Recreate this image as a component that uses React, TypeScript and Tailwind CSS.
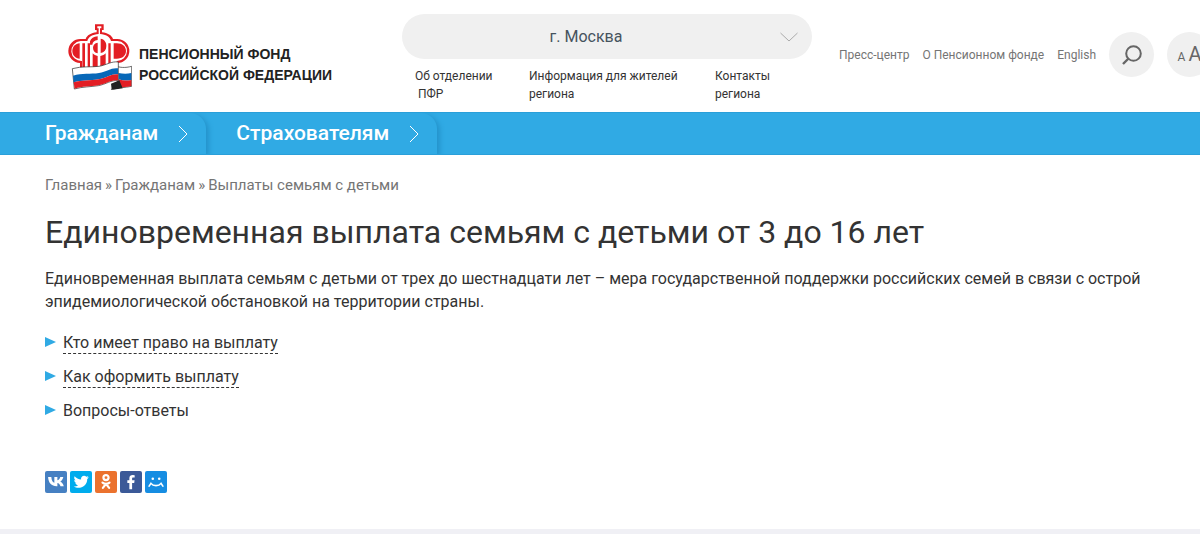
import React from "react";

function Logo() {
  return (
    <svg viewBox="24 24 192 198" className="h-[66px] w-16 shrink-0" aria-hidden="true">
      <path
        d="M105 25H131V42H126V49C143 51 155 58 159 69H172A36 36 0 0 1 172 141V156H60V141A36 36 0 0 1 62 69H77C81 58 93 51 110 49V42H105Z"
        fill="#e31e24"
      />
      <path
        d="M112 31H124V37H120V54C138 55 150 63 153 75H172A30 30 0 0 1 170 135V160H66V135A30 30 0 0 1 62 75H82C85 63 98 55 116 54V37H112Z"
        fill="#fff"
      />
      <path d="M59 82V128C46 127 37 118 37 105S46 83 59 82Z" fill="#e31e24" />
      <path d="M67 82H75V160H67ZM83 82H90V160H83Z" fill="#e31e24" />
      <path d="M90 76C93 67 101 62 113 61V72C103 73 98 78 97 86H90Z" fill="#e31e24" />
      <path d="M99 95C99 87 104 81 113 80V112C104 111 99 104 99 95Z" fill="#e31e24" />
      <path d="M122 68C133 70 139 78 139 90S133 109 122 111Z" fill="#e31e24" />
      <path d="M98 112C102 117 107 119 113 120V160H98ZM121 120C128 119 133 117 137 112V155H121Z" fill="#e31e24" />
      <path d="M145 82H152V150H145ZM161 82H170C188 82 198 92 198 105S188 128 170 128H161Z" fill="#e31e24" />
      <path d="M160 147C178 156 196 156 215 151V211C194 215 175 215 154 221L175 194Z" fill="#fff" stroke="#222" strokeWidth="2" />
      <path d="M175 171C190 174 202 174 214 171V192C200 195 188 194 176 190Z" fill="#0868b8" />
      <path d="M176 190C188 194 200 195 214 192V210C202 213 187 214 174 215Z" fill="#e31e24" />
      <path d="M153 203L178 193L188 217C176 218 165 222 155 220Z" fill="#222" />
      <path d="M37 158C66 150 92 154 117 151C140 147 154 135 175 138V194C154 191 138 205 115 209C89 213 68 212 43 219Z" fill="#fff" stroke="#222" strokeWidth="2" />
      <path d="M39 179C66 171 92 175 117 171C141 167 154 154 174 157V175C154 173 140 186 116 190C90 194 67 192 41 199Z" fill="#0868b8" />
      <path d="M41 199C67 192 90 194 116 190C140 186 154 173 174 175V193C154 190 138 204 115 208C89 212 68 211 44 218Z" fill="#e31e24" />
    </svg>
  );
}

const regionLinks = [
  { text: "Об отделении\n\u00a0ПФР", cls: "w-[114px]" },
  { text: "Информация для жителей\nрегиона", cls: "w-[186px]" },
  { text: "Контакты\nрегиона", cls: "" },
];

function Header() {
  return (
    <header className="flex h-28 overflow-hidden bg-white">
      <a href="#" className="ml-[68px] mt-6 flex w-[334px] shrink-0 items-start gap-[7px]">
        <Logo />
        <span className="mt-5 whitespace-nowrap font-['Liberation_Sans',Arial,sans-serif] text-[14px] font-bold leading-[21px] text-[#222]">
          ПЕНСИОННЫЙ ФОНД
          <br />
          РОССИЙСКОЙ ФЕДЕРАЦИИ
        </span>
      </a>
      <div className="mt-3.5 w-[410px] shrink-0">
        <div className="grid">
          <select
            aria-label="Регион"
            className="col-start-1 row-start-1 h-[45px] w-full appearance-none rounded-full bg-[#f0f0f0] pr-[42px] text-center [text-align-last:center] text-base text-[#46535e]"
          >
            <option>г. Москва</option>
          </select>
          <svg viewBox="0 0 18 10" className="pointer-events-none col-start-1 row-start-1 mr-3.5 h-2.5 w-[18px] self-center justify-self-end" fill="none" stroke="#aaa" aria-hidden="true">
            <path d="M.5 1L9 9L17.5 1" />
          </svg>
        </div>
        <nav className="ml-[13px] mt-2 flex text-xs leading-[18px] text-[#333]">
          {regionLinks.map((l) => (
            <a key={l.text} href="#" className={`whitespace-pre ${l.cls}`}>
              {l.text}
            </a>
          ))}
        </nav>
      </div>
      <div className="ml-[27px] mt-8 flex h-[45px] shrink-0 items-center gap-[13px] text-xs text-[#757575]">
        <a href="#">Пресс-центр</a>
        <a href="#">О Пенсионном фонде</a>
        <a href="#">English</a>
        <button aria-label="Поиск" className="flex size-[45px] items-center justify-center rounded-full bg-[#f0f0f0]">
          <svg viewBox="0 0 20 20" className="size-5" fill="none" stroke="#666" strokeWidth="2" aria-hidden="true">
            <circle cx="11.5" cy="8.5" r="7.3" />
            <path d="M6.5 13.5L1 19" strokeWidth="2.4" />
          </svg>
        </button>
        <button aria-label="Размер шрифта" className="flex size-[45px] items-baseline justify-center gap-[3px] rounded-full bg-[#f0f0f0] text-[#666]">
          <span className="text-xs">А</span>
          <span className="text-xl leading-[44px]">А</span>
        </button>
      </div>
    </header>
  );
}

function MainNav() {
  return (
    <nav className="flex h-[43px] border-y border-[#2a9fd9] bg-[#30aae4] text-[21px] font-medium text-white">
      {[
        { label: "Гражданам", pad: "pl-[45px]" },
        { label: "Страхователям", pad: "pl-[30px]" },
      ].map(({ label, pad }) => (
        <a
          key={label}
          href="#"
          className={`flex items-center gap-5 rounded-tr-2xl pr-[18px] shadow-[3px_2px_5px_#2493cb] [clip-path:inset(0_-8px_0_0)] ${pad}`}
        >
          {label}
          <svg viewBox="0 0 10 18" className="h-[18px] w-2.5" fill="none" stroke="#fff" aria-hidden="true">
            <path d="M1 1L9 9L1 17" />
          </svg>
        </a>
      ))}
    </nav>
  );
}

const topics = [
  { label: "Кто имеет право на выплату", dashed: true },
  { label: "Как оформить выплату", dashed: true },
  { label: "Вопросы-ответы", dashed: false },
];

const socials = [
  {
    name: "ВКонтакте",
    bg: "bg-[#4680c2]",
    icon: <path d="M12.7 16.6C7 16.6 3.6 12.7 3.4 6.5H6.9C7.1 10.6 8.8 12.4 10.2 12.8V6.5H13.5V10.1C14.9 9.9 16.2 8.4 16.7 6.5H20C19.6 9 17.8 10.8 16.6 11.5C17.8 12.1 19.7 13.6 20.5 16.6H16.9C16.3 14.8 15 13.5 13.5 13.2V16.6Z" />,
  },
  {
    name: "Twitter",
    bg: "bg-[#00aced]",
    icon: <path d="M20.5 6.8C19.9 7.1 19.2 7.3 18.5 7.4C19.2 6.9 19.8 6.2 20 5.4C19.4 5.8 18.6 6.1 17.8 6.3C17.2 5.6 16.3 5.2 15.4 5.2C13.2 5.2 11.6 7.2 12.1 9.3C9.3 9.2 6.8 7.8 5 5.7C4.2 7.3 4.6 9.3 6.1 10.2C5.6 10.2 5 10.1 4.6 9.8C4.6 11.4 5.7 12.8 7.2 13.1C6.8 13.3 6.3 13.3 5.7 13.2C6.2 14.5 7.4 15.5 8.9 15.5C7.5 16.5 5.8 17 4 16.8C10 20.6 18.9 16.9 18.8 8.6C19.5 8.1 20 7.5 20.5 6.8Z" />,
  },
  {
    name: "Одноклассники",
    bg: "bg-[#eb722e]",
    icon: (
      <g fill="none" stroke="#fff" strokeWidth="2.4" strokeLinecap="round">
        <circle cx="12" cy="7.2" r="2.8" />
        <path d="M8.2 12.6C10.5 14.4 13.5 14.4 15.8 12.6M12 14L8.6 18.4M12 14L15.4 18.4" />
      </g>
    ),
  },
  {
    name: "Facebook",
    bg: "bg-[#3b5998]",
    icon: <path d="M10.2 20V13H8V10.1H10.2V8C10.2 5.5 11.7 4.4 13.9 4.4L16 4.5V7.1H14.5C13.4 7.1 13.2 7.6 13.2 8.4V10.1H15.9L15.5 13H13.2V20Z" />,
  },
  {
    name: "Мой Мир",
    bg: "bg-[#168de2]",
    icon: (
      <g>
        <circle cx="8.5" cy="8.5" r="1.4" />
        <circle cx="15.5" cy="8.5" r="1.4" />
        <path d="M4.5 16.5L6.5 13.5C9 16.8 15 16.8 17.5 13.5L19.5 16.5" fill="none" stroke="#fff" strokeWidth="1.8" strokeLinecap="round" />
      </g>
    ),
  },
];

export default function App() {
  return (
    <div className="overflow-x-hidden bg-white font-[Roboto,sans-serif]">
      <Header />
      <MainNav />
      <main className="px-[45px] pb-9 pt-5 text-[#333]">
        <nav className="flex gap-[3px] text-[15px] leading-5 text-[#757575]">
          <a href="#">Главная</a>
          <span>»</span>
          <a href="#">Гражданам</a>
          <span>»</span>
          <a href="#">Выплаты семьям с детьми</a>
        </nav>
        <h1 className="mt-4 text-[32px] leading-[42px]">Единовременная выплата семьям с детьми от 3 до 16 лет</h1>
        <p className="mt-3.5 text-base leading-[23px]">
          Единовременная выплата семьям с детьми от трех до шестнадцати лет – мера государственной поддержки российских семей в связи с острой эпидемиологической обстановкой на территории страны.
        </p>
        <ul className="mt-5 flex flex-col items-start gap-3.5 text-base leading-5">
          {topics.map((t) => (
            <li key={t.label} className="flex items-start gap-[7px]">
              <svg viewBox="0 0 11 10" className="mt-1 h-2.5 w-[11px]" fill="#30aae4" aria-hidden="true">
                <path d="M0 0L11 5L0 10Z" />
              </svg>
              <a href="#" className={t.dashed ? "-mb-px border-b border-dashed border-[#333]" : ""}>
                {t.label}
              </a>
            </li>
          ))}
        </ul>
        <div className="mt-[50px] flex gap-[3px]">
          {socials.map((s) => (
            <a key={s.name} href="#" aria-label={s.name} className={`size-[22px] rounded-xs ${s.bg}`}>
              <svg viewBox="0 0 24 24" className="size-[22px]" fill="#fff" aria-hidden="true">
                {s.icon}
              </svg>
            </a>
          ))}
        </div>
      </main>
      <footer className="h-[5px] bg-[#f0f0f5]" />
    </div>
  );
}
